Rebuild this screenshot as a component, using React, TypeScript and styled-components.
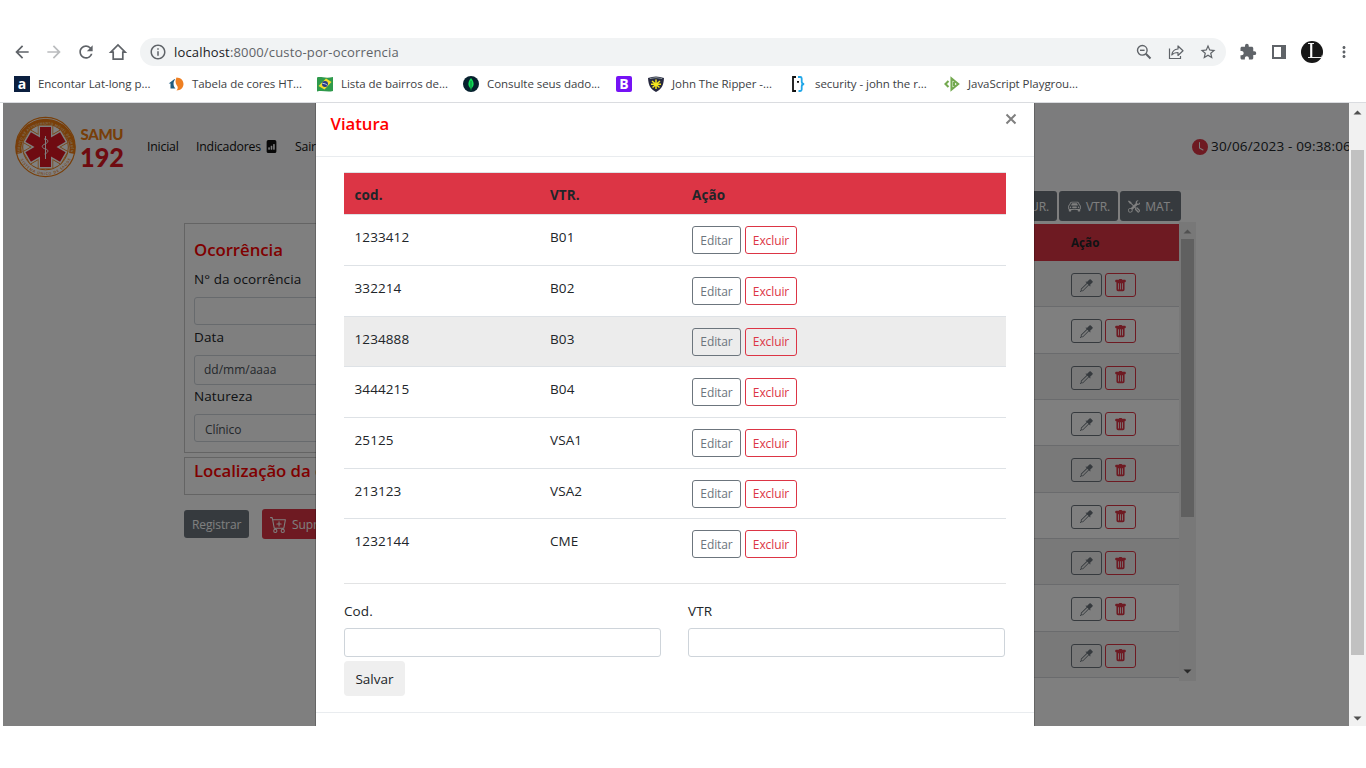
import React from "react";
import styled, { createGlobalStyle, css } from "styled-components";
import {
  MdArrowBack,
  MdArrowForward,
  MdExtension,
  MdInfoOutline,
  MdMoreVert,
  MdRefresh,
  MdStarBorder,
} from "react-icons/md";
import {
  BsCarFront,
  BsCartPlus,
  BsClockFill,
  BsEyedropper,
  BsFileBarGraphFill,
  BsTools,
  BsTrashFill,
} from "react-icons/bs";

const GlobalStyle = createGlobalStyle`
  *, *::before, *::after { box-sizing: border-box; }
  body {
    margin: 0;
    background: #fff;
    color: #212529;
    font-family: "Open Sans", "Noto Sans", sans-serif;
    font-size: 13.5px;
    line-height: 21.6px;
    overflow: hidden;
  }
`;

const Screen = styled.div`
  width: 1366px;
  height: 768px;
  padding-top: 38px;
  overflow: hidden;
`;

/* ---------- Browser chrome ---------- */

const Toolbar = styled.div`
  display: flex;
  align-items: center;
  height: 28px;
  padding-left: 12px;
  color: #5f6368;
`;

const NavIcons = styled.div`
  display: flex;
  align-items: center;
  gap: 12px;
  width: 128px;
  svg { display: block; }
`;

const AddressBar = styled.div`
  display: flex;
  align-items: center;
  width: 1086px;
  height: 28px;
  padding: 0 9px 0 9px;
  border-radius: 14px;
  background: #f1f3f4;
`;

const Url = styled.div`
  flex: 1;
  margin-left: 7px;
  padding-top: 1px;
  font-size: 13px;
  letter-spacing: 0.16px;
  color: #5f6368;
  b { font-weight: 400; color: #202124; }
`;

const BarActions = styled.div`
  display: flex;
  align-items: center;
  gap: 14px;
`;

const Extensions = styled.div`
  display: flex;
  align-items: center;
  margin-left: 13px;
  gap: 15px;
`;

const BookmarkBar = styled.div`
  display: flex;
  align-items: center;
  height: 37px;
  padding-left: 14px;
  border-bottom: 1px solid #dadce0;
`;

const Bookmark = styled.div<{ $w: number }>`
  display: flex;
  align-items: center;
  flex: none;
  width: ${(p) => p.$w}px;
  gap: 8px;
  font-size: 11.5px;
  line-height: 16px;
  letter-spacing: -0.05px;
  color: #3c4043;
  white-space: nowrap;
  svg { flex: none; }
`;

/* ---------- Page ---------- */

const Viewport = styled.div`
  position: relative;
  display: flex;
  height: 623px;
  padding-left: 3px;
`;

const Page = styled.div`
  width: 1346px;
  height: 623px;
  overflow: hidden;
  background: #fff;
`;

const NavBar = styled.nav`
  display: flex;
  align-items: center;
  height: 87px;
  padding: 0 0 0 12px;
  background: #f8f9fa;
  white-space: nowrap;
`;

const NavLink = styled.a<{ $w: number }>`
  display: flex;
  align-items: center;
  flex: none;
  gap: 4px;
  width: ${(p) => p.$w}px;
  font-size: 12.3px;
  letter-spacing: -0.2px;
  color: #111;
`;

const Clock = styled.div`
  display: flex;
  align-items: center;
  gap: 3px;
  margin-left: auto;
  margin-right: -2px;
  font-size: 13.5px;
  letter-spacing: 0.17px;
  svg { color: #dc3545; }
`;

const Columns = styled.main`
  display: flex;
  padding-left: 181px;
`;

const FormColumn = styled.section`
  width: 500px;
  padding-top: 33px;
`;

const Card = styled.div<{ $h: number }>`
  height: ${(p) => p.$h}px;
  margin-bottom: 4px;
  padding: 0 9px;
  border: 1px solid #c8c8c8;
`;

const Heading = styled.h2<{ $top?: number }>`
  margin: 0;
  padding-top: ${(p) => p.$top ?? 0}px;
  font-size: 16.8px;
  font-weight: 600;
  line-height: 26px;
  letter-spacing: -0.05px;
  color: #f00;
`;

const Label = styled.label<{ $top?: number }>`
  display: block;
  margin-top: ${(p) => p.$top ?? 0}px;
  letter-spacing: 0.1px;
`;

const Field = styled.div<{ $h?: number; $top?: number }>`
  height: ${(p) => p.$h ?? 29}px;
  margin-top: ${(p) => p.$top ?? 6}px;
  border: 1px solid #ced4da;
  border-radius: 3px;
  background: #fff;
  padding: 0 9px;
  font-size: 12px;
  line-height: ${(p) => (p.$h ?? 29) - 3}px;
  color: #495057;
`;

const SelectField = styled(Field)`
  padding-left: 10px;
  line-height: 29px;
  letter-spacing: -0.1px;
`;

const FormActions = styled.div`
  display: flex;
  align-items: center;
  gap: 13px;
  margin-top: 14px;
`;

const tones = { secondary: "#6c757d", danger: "#dc3545" };
type Tone = keyof typeof tones;

const SolidButton = styled.button<{ $tone: Tone; $w: number; $h?: number; $end?: boolean }>`
  display: flex;
  align-items: center;
  justify-content: ${(p) => (p.$end ? "flex-end" : "flex-start")};
  gap: 5px;
  flex: none;
  width: ${(p) => p.$w}px;
  height: ${(p) => p.$h ?? 30}px;
  padding: 0 8px;
  border: 0;
  border-radius: 3px;
  background: ${(p) => tones[p.$tone]};
  color: #fff;
  font-family: inherit;
  font-size: 12px;
  letter-spacing: -0.1px;
  white-space: nowrap;
`;

const OutlineButton = styled.button<{ $tone: Tone; $w: number; $h: number }>`
  display: inline-flex;
  align-items: center;
  justify-content: center;
  flex: none;
  width: ${(p) => p.$w}px;
  height: ${(p) => p.$h}px;
  padding: 0;
  border: 1px solid ${(p) => tones[p.$tone]};
  border-radius: 3px;
  background: transparent;
  color: ${(p) => tones[p.$tone]};
  font-family: inherit;
  font-size: 12px;
  letter-spacing: -0.1px;
`;

const ListColumn = styled.section`
  width: 512px;
`;

const ListActions = styled.div`
  display: flex;
  justify-content: flex-end;
  gap: 2px;
  height: 32px;
  padding: 1px 15px 0 0;
`;

const ScrollBox = styled.div`
  display: flex;
  height: 459px;
`;

const ListTable = styled.div`
  width: 495px;
  padding-top: 2px;
`;

const ListHead = styled.div`
  height: 37px;
  padding-left: 387px;
  background: #dc3545;
  font-size: 11.7px;
  font-weight: 700;
  line-height: 37px;
`;

const ListRow = styled.div<{ $odd: boolean }>`
  display: flex;
  gap: 3px;
  height: 46.35px;
  padding: 12px 0 0 387px;
  border-bottom: 1px solid #d4d7da;
  background: ${(p) => (p.$odd ? "#f2f2f2" : "#fff")};
`;

/* ---------- Scrollbars ---------- */

const Track = styled.div`
  display: flex;
  flex-direction: column;
  align-items: center;
  flex: none;
  width: 17px;
  height: 100%;
  background: #f1f1f1;
`;

const Arrow = styled.svg<{ $top?: number; $bottom?: number }>`
  display: block;
  width: 9px;
  height: 5px;
  flex: none;
  margin-top: ${(p) => p.$top ?? 0}px;
  margin-bottom: ${(p) => p.$bottom ?? 0}px;
`;

const Thumb = styled.div<{ $h: number; $top: number }>`
  width: 13px;
  height: ${(p) => p.$h}px;
  margin-top: ${(p) => p.$top}px;
  margin-bottom: auto;
  background: #c1c1c1;
`;

const ArrowUp = ({ color = "#505050" }) => (
  <Arrow viewBox="0 0 9 5" $top={7}>
    <path d="M.5 4.500 4.500.5 8.500 4.500z" fill={color} />
  </Arrow>
);
const ArrowDown = ({ bottom = 5 }) => (
  <Arrow viewBox="0 0 9 5" $bottom={bottom}>
    <path d="M.5.5 4.500 4.500 8.500.5z" fill="#505050" />
  </Arrow>
);

/* ---------- Modal ---------- */

const Backdrop = styled.div`
  position: absolute;
  inset: 0 17px 0 3px;
  display: flex;
  background: rgba(0, 0, 0, 0.5);
  overflow: hidden;
`;

const Dialog = styled.div`
  width: 720px;
  height: 623px;
  margin-left: 312px;
  border: solid rgba(0, 0, 0, 0.2);
  border-width: 0 1px;
  background: #fff;
  background-clip: padding-box;
`;

const DialogHeader = styled.header`
  display: flex;
  justify-content: space-between;
  height: 54px;
  padding: 8px 17px 0 14.5px;
  border-bottom: 1px solid #e9ecef;
`;

const DialogBody = styled.div`
  height: 556px;
  padding: 15px 28px 0;
  border-bottom: 1px solid #e9ecef;
`;

const gridColumns = css`
  display: grid;
  grid-template-columns: 195.5px 142px 1fr;
`;

const VehicleHead = styled.div`
  ${gridColumns}
  height: 42.45px;
  padding-left: 10.5px;
  border-top: 1px solid #dee2e6;
  background: #dc3545;
  font-weight: 700;
  line-height: 45px;
  font-size: 13.5px;
  letter-spacing: 0.1px;
`;

const VehicleRow = styled.div<{ $active: boolean }>`
  ${gridColumns}
  height: 50.65px;
  padding: 11px 0 0 10.5px;
  border-top: 1px solid #dee2e6;
  background: ${(p) => (p.$active ? "#ececec" : "#fff")};
`;

const Cell = styled.span`
  padding-top: 0.9px;
  letter-spacing: 0.1px;
`;

const RowActions = styled.div`
  display: flex;
  gap: 4px;
`;

const Fields = styled.div`
  display: grid;
  grid-template-columns: 317px 317px;
  gap: 27px;
  margin-top: 14px;
  padding-top: 17px;
  border-top: 1px solid #e2e3e4;
`;

const SaveButton = styled.button`
  display: block;
  width: 61px;
  height: 35px;
  margin-top: 4px;
  padding: 0;
  border: 0;
  border-radius: 4px;
  background: #efefef;
  color: #212529;
  font: 13.5px/36px "Open Sans", sans-serif;
`;

/* ---------- Drawings ---------- */

const HomeIcon = () => (
  <svg width="20" height="20" viewBox="0 0 20 20" fill="none" stroke="#5f6368" strokeWidth="1.700">
    <path d="M2.800 10.200H5.200V17.200H14.800V10.200H17.200L10 3z" />
  </svg>
);

const ZoomOutIcon = () => (
  <svg width="18" height="18" viewBox="0 0 18 18" fill="none" stroke="#5f6368" strokeWidth="1.400">
    <circle cx="7.300" cy="7.300" r="4.800" />
    <path d="m10.800 10.800 4.700 4.700" strokeWidth="2" />
    <path d="M5 7.300h4.600" />
  </svg>
);

const ShareIcon = () => (
  <svg width="18" height="18" viewBox="0 0 18 18" fill="none" stroke="#5f6368" strokeWidth="1.200">
    <path d="M2.500 5.500v10h11V13" />
    <path d="M11 3v3C7.500 6.300 5.200 8.300 4.800 12c1.500-1.900 3.500-2.500 6.200-2.500v3l5-4.800z" strokeLinejoin="round" />
  </svg>
);

const PanelIcon = () => (
  <svg width="14" height="14" viewBox="0 0 14 14">
    <path d="M1 1h12v12H1z" fill="none" stroke="#5f6368" strokeWidth="2" />
    <path d="M9 1h4v12H9z" fill="#5f6368" />
  </svg>
);

const Avatar = () => (
  <svg width="22" height="22" viewBox="0 0 22 22">
    <circle cx="11" cy="11" r="11" fill="#171717" />
    <path d="M7 2.500h6M10 2.500v14M7 16.500h14V14.500" fill="none" stroke="#eee" strokeWidth="1" />
    <path d="M10.300 2.500v14" stroke="#fff" strokeWidth="2" />
  </svg>
);

const FavLetter = ({ bg, r, children }: { bg: string; r: number; children: string }) => (
  <svg width="16" height="16" viewBox="0 0 16 16">
    <rect width="16" height="16" rx={r} fill={bg} />
    <text x="8" y="12.800" textAnchor="middle" fontFamily="Open Sans" fontWeight="700" fontSize="14" fill="#fff">
      {children}
    </text>
  </svg>
);

const FavColors = () => (
  <svg width="16" height="16" viewBox="0 0 16 16">
    <path d="M6.500 3 .7 7.500H2.500v5H7.500C5 10 5 6 7 3.500z" fill="#1f5c80" />
    <path d="M8.500 1.500c4 0 7 2.800 7 6.500s-3 6.500-7 6.500c2-2 1.300-4 .2-5.300-1.400-2-1.600-5-.2-7.700z" fill="#ee7f22" />
  </svg>
);

const FavBrazil = () => (
  <svg width="16" height="16" viewBox="0 0 16 16">
    <path d="M0 1.500C4 0 8 3 16 1V15c-6 1.500-10-1-16 .5z" fill="#2f9a4c" />
    <path d="M9 2.500 14.500 6 7.500 13.500 1.500 10z" fill="#f3dc2d" />
    <circle cx="8" cy="8" r="3" fill="#263c86" />
    <path d="M5.300 7.300q3 0 5.200 2" fill="none" stroke="#dfe8f4" strokeWidth=".8" />
  </svg>
);

const FavLeaf = () => (
  <svg width="16" height="16" viewBox="0 0 16 16">
    <circle cx="8" cy="8" r="8" fill="#06202e" />
    <path d="M8 2c3.500 4 3.500 8 0 11C4.500 10 4.500 6 8 2z" fill="#0fdc57" />
    <path d="M8 5v9.500" stroke="#07833a" />
  </svg>
);

const FavShield = () => (
  <svg width="16" height="16" viewBox="0 0 16 16">
    <path d="M0 2Q8-1 16 2C15.500 9 14 13 8 16 2 13 .5 9 0 2z" fill="#27293f" />
    <path d="M1.800 2.600Q8 .6 14.200 2.600" fill="none" stroke="#9aa" strokeWidth=".8" />
    <path d="M8 3.500v9.500M4 5l7.500 6.500M12 5l-7.500 6.500M3 8.300h10" stroke="#f4e51c" strokeWidth="1.500" />
  </svg>
);

const FavBraces = () => (
  <svg width="16" height="16" viewBox="0 0 16 16" fill="none" strokeWidth="1.800">
    <path d="M5 1H2v14H5" stroke="#111" />
    <path d="M7 1h2.200q1.500 0 1.500 1.500v3q0 2.500 2.500 2.500-2.500 0-2.500 2.500v3q0 1.500-1.500 1.500H7.500" stroke="#22a7e8" />
    <path d="M6 5.800h2" stroke="#111" />
  </svg>
);

const FavPlay = () => (
  <svg width="16" height="16" viewBox="0 0 16 16" fill="none" stroke="#74a950" strokeWidth="2.100">
    <path d="M4.500 5 1.500 8l3 3" />
    <path d="M7.500 2.500v11L14.200 8z" />
    <path d="M10 6v4" />
  </svg>
);

const LogoSvg = styled.svg`
  flex: none;
  width: 112px;
  height: 64px;
  margin-right: 20px;
  overflow: visible;
`;

const Logo = () => (
  <LogoSvg viewBox="0 0 112 64">
    <defs>
      <path id="ringTop" d="M5.200 38A25.500 25.500 0 1 1 55.800 38" />
      <path id="ringBottom" d="M3.800 40A27.800 27.800 0 0 0 57.200 40" />
    </defs>
    <circle cx="30.500" cy="32" r="29.600" fill="#fff" stroke="#f07d12" strokeWidth="1.200" />
    <path d="M3.900 38.500A27 27 0 1 1 57.100 38.500" fill="none" stroke="#f07d12" strokeWidth="6" />
    <circle cx="30.500" cy="32" r="22.800" fill="#fff" stroke="#f07d12" strokeWidth="1" />
    <text fontSize="3.200" fontWeight="600" fill="#ffe0c0" fontFamily="Open Sans">
      <textPath href="#ringTop" textLength="92">SERVIÇO DE ATENDIMENTO MÓVEL DE URGÊNCIA</textPath>
    </text>
    <text fontSize="3.600" fontWeight="600" fill="#f07d12" fontFamily="Open Sans">
      <textPath href="#ringBottom" startOffset="5" textLength="62">SISTEMA ÚNICO DE SAÚDE</textPath>
    </text>
    {[0, 60, 120].map((a) => (
      <rect key={a} x="22.800" y="9.800" width="15.400" height="44.400" fill="#f07d12" transform={`rotate(${a} 30.5 32)`} />
    ))}
    {[0, 60, 120].map((a) => (
      <rect key={a} x="23.500" y="10.500" width="14" height="43" fill="#fff" transform={`rotate(${a} 30.5 32)`} />
    ))}
    {[0, 60, 120].map((a) => (
      <rect key={a} x="25" y="12" width="11" height="40" fill="#df1722" transform={`rotate(${a} 30.5 32)`} />
    ))}
    <path d="M30.500 21v23" stroke="#fff" strokeWidth="1" />
    <path d="M29 24c5 0 5 3.500 1 5s-3.500 4 .5 5 2.500 4-1 5" fill="none" stroke="#fff" strokeWidth="1" />
    <text x="65.500" y="25" fontFamily="Lato" fontWeight="900" fontSize="15" textLength="43" lengthAdjust="spacing" fill="#f07d12">
      SAMU
    </text>
    <text x="65" y="51.500" fontFamily="Lato" fontWeight="900" fontSize="27" textLength="44" lengthAdjust="spacingAndGlyphs" fill="#df1722">
      192
    </text>
  </LogoSvg>
);

const CloseIcon = () => (
  <svg width="12" height="12" viewBox="0 0 12 12" stroke="#7f7f7f" strokeWidth="2">
    <path d="m1.500 1.500 9 9m0-9-9 9" />
  </svg>
);

const CloseBox = styled.div`
  display: flex;
  height: 16px;
  align-items: center;
`;

const vehicles = [
  ["1233412", "B01"],
  ["332214", "B02"],
  ["1234888", "B03"],
  ["3444215", "B04"],
  ["25125", "VSA1"],
  ["213123", "VSA2"],
  ["1232144", "CME"],
];

const bookmarks: { w: number; icon: React.ReactNode; label?: string }[] = [
  { w: 154, icon: <FavLetter bg="#0b1f3f" r={0}>a</FavLetter>, label: "Encontar Lat-long p..." },
  { w: 149, icon: <FavColors />, label: "Tabela de cores HT..." },
  { w: 146, icon: <FavBrazil />, label: "Lista de bairros de..." },
  { w: 153, icon: <FavLeaf />, label: "Consulte seus dado..." },
  { w: 32, icon: <FavLetter bg="#7512f5" r={2}>B</FavLetter> },
  { w: 143, icon: <FavShield />, label: "John The Ripper -..." },
  { w: 153, icon: <FavBraces />, label: "security - john the r..." },
  { w: 150, icon: <FavPlay />, label: "JavaScript Playgrou..." },
];

export default function App() {
  return (
    <Screen>
      <GlobalStyle />
      <Toolbar>
        <NavIcons>
          <MdArrowBack size={20} />
          <MdArrowForward size={20} color="#babcbe" />
          <MdRefresh size={20} />
          <HomeIcon />
        </NavIcons>
        <AddressBar>
          <MdInfoOutline size={18} />
          <Url><b>localhost</b>:8000/custo-por-ocorrencia</Url>
          <BarActions>
            <ZoomOutIcon />
            <ShareIcon />
            <MdStarBorder size={18} />
          </BarActions>
        </AddressBar>
        <Extensions>
          <MdExtension size={18} />
          <PanelIcon />
          <Avatar />
          <MdMoreVert size={18} style={{ marginLeft: -3 }} />
        </Extensions>
      </Toolbar>
      <BookmarkBar>
        {bookmarks.map((b, i) => (
          <Bookmark key={i} $w={b.w}>
            {b.icon}
            {b.label}
          </Bookmark>
        ))}
      </BookmarkBar>

      <Viewport>
        <Page>
          <NavBar>
            <Logo />
            <NavLink $w={49}>Inicial</NavLink>
            <NavLink $w={99}>
              Indicadores <BsFileBarGraphFill size={13} />
            </NavLink>
            <NavLink $w={40}>Sair</NavLink>
            <Clock>
              <BsClockFill size={16} />
              30/06/2023 - 09:38:06
            </Clock>
          </NavBar>
          <Columns>
            <FormColumn>
              <Card $h={230}>
                <Heading $top={13}>Ocorrência</Heading>
                <Label $top={6}>N° da ocorrência</Label>
                <Field $h={28} />
                <Label $top={2}>Data</Label>
                <Field $h={30} $top={7}>dd/mm/aaaa</Field>
                <Label $top={1}>Natureza</Label>
                <SelectField $h={28} $top={6}>Clínico</SelectField>
              </Card>
              <Card $h={38}>
                <Heading>Localização da ocorrência</Heading>
              </Card>
              <FormActions>
                <SolidButton $tone="secondary" $w={65} $h={28}>Registrar</SolidButton>
                <SolidButton $tone="danger" $w={110}>
                  <BsCartPlus size={17} /> Suprimentos
                </SolidButton>
              </FormActions>
            </FormColumn>
            <ListColumn>
              <ListActions>
                <SolidButton $tone="secondary" $w={61} $end>CIRUR.</SolidButton>
                <SolidButton $tone="secondary" $w={59} $end><BsCarFront size={13} /> VTR.</SolidButton>
                <SolidButton $tone="secondary" $w={61} $end><BsTools size={13} /> MAT.</SolidButton>
              </ListActions>
              <ScrollBox>
                <ListTable>
                  <ListHead>Ação</ListHead>
                  {Array.from({ length: 9 }, (_, i) => (
                    <ListRow key={i} $odd={i % 2 === 0}>
                      <OutlineButton $tone="secondary" $w={31} $h={24}><BsEyedropper size={13} /></OutlineButton>
                      <OutlineButton $tone="danger" $w={31} $h={24}><BsTrashFill size={13} /></OutlineButton>
                    </ListRow>
                  ))}
                </ListTable>
                <Track>
                  <ArrowUp color="#a3a3a3" />
                  <Thumb $h={278} $top={5} />
                  <ArrowDown bottom={7} />
                </Track>
              </ScrollBox>
            </ListColumn>
          </Columns>
        </Page>
        <Track>
          <ArrowUp />
          <Thumb $h={505} $top={35} />
          <ArrowDown />
        </Track>

        <Backdrop>
          <Dialog>
            <DialogHeader>
              <Heading>Viatura</Heading>
              <CloseBox><CloseIcon /></CloseBox>
            </DialogHeader>
            <DialogBody>
              <VehicleHead>
                <span>cod.</span>
                <span>VTR.</span>
                <span>Ação</span>
              </VehicleHead>
              {vehicles.map(([cod, vtr], i) => (
                <VehicleRow key={cod} $active={i === 2}>
                  <Cell>{cod}</Cell>
                  <Cell>{vtr}</Cell>
                  <RowActions>
                    <OutlineButton $tone="secondary" $w={49} $h={28}>Editar</OutlineButton>
                    <OutlineButton $tone="danger" $w={52} $h={28}>Excluir</OutlineButton>
                  </RowActions>
                </VehicleRow>
              ))}
              <Fields>
                <div>
                  <Label>Cod.</Label>
                  <Field $top={5} />
                </div>
                <div>
                  <Label>VTR</Label>
                  <Field $top={5} />
                </div>
              </Fields>
              <SaveButton>Salvar</SaveButton>
            </DialogBody>
          </Dialog>
        </Backdrop>
      </Viewport>
    </Screen>
  );
}
